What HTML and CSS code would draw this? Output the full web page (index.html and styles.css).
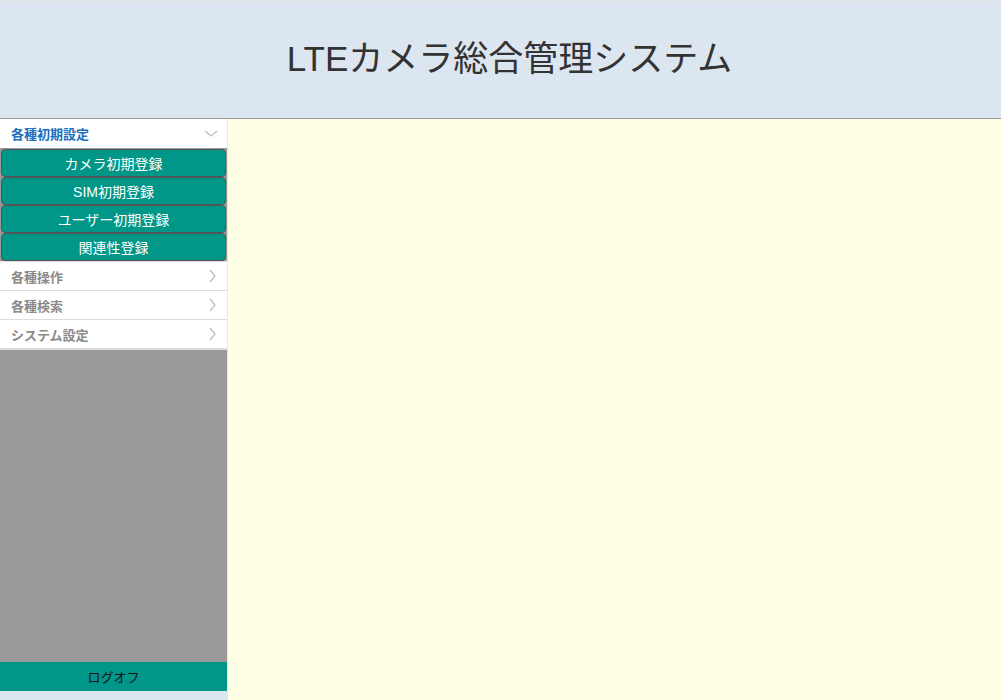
FILE: index.html
```html
<!DOCTYPE html>
<html lang="ja">
<head>
    <meta charset="UTF-8">
    <title>LTEカメラ総合管理システム</title>
    <link rel="stylesheet" href="styles.css">
</head>
<body>
    <header class="site-header">
        <h1 class="site-title">LTEカメラ総合管理システム</h1>
    </header>
    <div class="layout">
        <nav class="sidebar">
            <div class="menu">
                <div class="menu-group open">
                    <div class="menu-head">
                        <span>各種初期設定</span>
                        <svg class="chevron" width="14" height="8" viewBox="0 0 14 8"><path d="M1 1 L7 6 L13 1" fill="none" stroke="#bbb" stroke-width="1.2"/></svg>
                    </div>
                    <div class="submenu">
                        <a class="sub-button" href="#">カメラ初期登録</a>
                        <a class="sub-button" href="#">SIM初期登録</a>
                        <a class="sub-button" href="#">ユーザー初期登録</a>
                        <a class="sub-button" href="#">関連性登録</a>
                    </div>
                </div>
                <div class="menu-group">
                    <div class="menu-head">
                        <span>各種操作</span>
                        <svg class="chevron" width="8" height="14" viewBox="0 0 8 14"><path d="M1 1 L6 7 L1 13" fill="none" stroke="#bbb" stroke-width="1.2"/></svg>
                    </div>
                </div>
                <div class="menu-group">
                    <div class="menu-head">
                        <span>各種検索</span>
                        <svg class="chevron" width="8" height="14" viewBox="0 0 8 14"><path d="M1 1 L6 7 L1 13" fill="none" stroke="#bbb" stroke-width="1.2"/></svg>
                    </div>
                </div>
                <div class="menu-group">
                    <div class="menu-head">
                        <span>システム設定</span>
                        <svg class="chevron" width="8" height="14" viewBox="0 0 8 14"><path d="M1 1 L6 7 L1 13" fill="none" stroke="#bbb" stroke-width="1.2"/></svg>
                    </div>
                </div>
            </div>
            <div class="sidebar-fill"></div>
            <a class="logoff" href="#">ログオフ</a>
            <div class="sidebar-foot"></div>
        </nav>
        <main class="content"></main>
    </div>
</body>
</html>
```

FILE: styles.css
```css
* {
    box-sizing: border-box;
}
body {
    margin: 0;
    height: 700px;
    overflow: hidden;
    font-family: "Liberation Sans", "Noto Sans CJK JP", sans-serif;
    background: #ffffe6;
}
.site-header {
    height: 119px;
    background: #dce6f1;
    border-top: 1px solid #e3e3e3;
    border-bottom: 1px solid #999;
    display: flex;
    align-items: center;
    justify-content: center;
}
.site-title {
    margin: 0 0 9px 18px;
    font-size: 35px;
    font-weight: normal;
    color: #333;
}
.layout {
    display: flex;
    height: 581px;
}
.sidebar {
    width: 228px;
    display: flex;
    flex-direction: column;
    background: #999;
    border-right: 1px solid #e8e8e0;
}
.menu {
    background: #fff;
}
.menu-head {
    height: 29px;
    display: flex;
    align-items: center;
    justify-content: space-between;
    padding: 0 10px 0 11px;
    font-size: 13px;
    font-weight: bold;
    color: #8a8a8a;
    border-bottom: 1px solid #ddd;
}
.menu-group.open .menu-head {
    color: #1e6fc0;
    border-bottom: none;
}
.menu-group.open .chevron {
    margin-right: -1px;
}
.submenu {
    background: #999;
    padding: 1px 1px 0;
    display: flex;
    flex-direction: column;
    border-bottom: 1px solid #ddd;
}
.sub-button {
    height: 28px;
    display: flex;
    align-items: center;
    justify-content: center;
    background: #009688;
    border: 1px solid #555;
    border-radius: 4px;
    color: #fff;
    font-size: 14px;
    text-decoration: none;
}
.sidebar-fill {
    flex: 1;
    border-top: 1px solid #e0e0e0;
}
.logoff {
    height: 29px;
    display: flex;
    align-items: center;
    justify-content: center;
    background: #009688;
    color: #111;
    font-size: 13px;
    text-decoration: none;
}
.sidebar-foot {
    height: 9px;
    background: #dce6f1;
}
.content {
    flex: 1;
    background: #ffffe6;
}
```
